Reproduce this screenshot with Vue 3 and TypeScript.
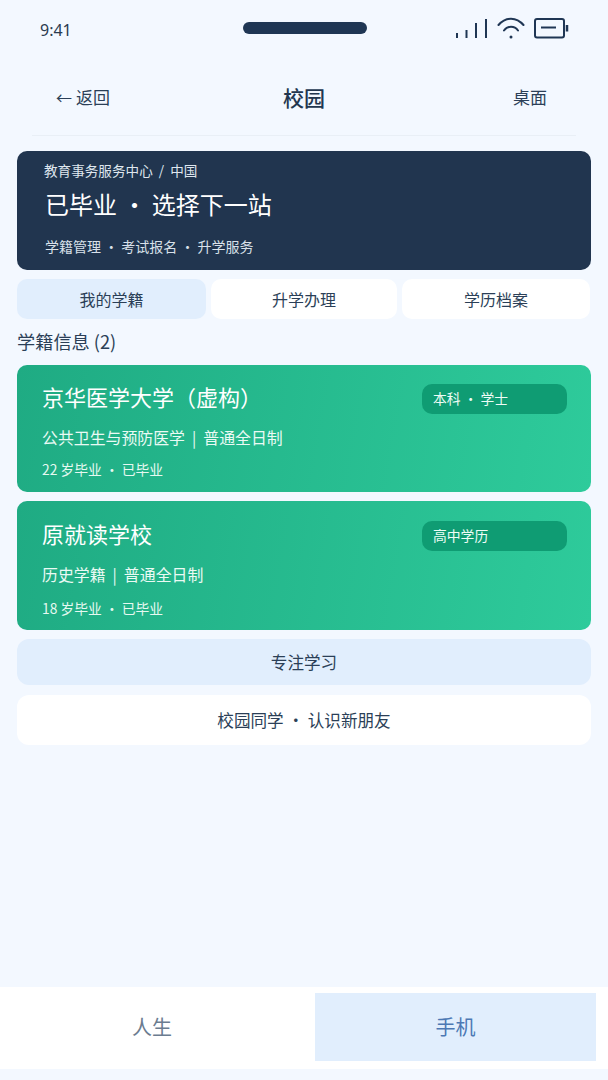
<template>
  <div class="phone">
    <div class="status-bar">
      <span class="time">9:41</span>
      <div class="notch"></div>
      <div class="status-icons">
        <svg width="33" height="22" viewBox="0 0 33 22" fill="none" stroke="#1f3654" stroke-width="2">
          <path d="M2 17v5M11.500 14v8M21 7v15M31 3v19" />
        </svg>
        <svg width="28" height="26" viewBox="0 0 28 26" fill="none" stroke="#1f3654" stroke-width="2" stroke-linecap="round">
          <path d="M1.500 9C8.500 0.500 19.500 0.500 26.500 9" />
          <path d="M7 14.500C10.500 9.500 17.500 9.500 21 14.500" />
          <circle cx="14" cy="21" r="1.500" fill="#1f3654" stroke="none" />
        </svg>
        <svg width="35" height="24" viewBox="0 0 35 24" fill="none" stroke="#1f3654" stroke-width="2">
          <rect x="1" y="3" width="29" height="18.500" rx="2" />
          <path d="M7 11.500h15" />
          <path d="M33 9v6.500" stroke-width="2.500" />
        </svg>
      </div>
    </div>

    <header class="nav">
      <span class="nav-link back"><span class="arrow">←</span>返回</span>
      <span class="nav-title">校园</span>
      <span class="nav-link desk">桌面</span>
    </header>

    <main class="content">
      <section class="hero">
        <div class="hero-crumb">教育事务服务中心 / 中国</div>
        <div class="hero-title">已毕业 · 选择下一站</div>
        <div class="hero-sub">学籍管理 · 考试报名 · 升学服务</div>
      </section>

      <div class="tabs">
        <div v-for="(tab, i) in tabs" :key="tab" class="tab" :class="{ active: i === 0 }">{{ tab }}</div>
      </div>

      <h2 class="section-title">学籍信息 (2)</h2>

      <article v-for="school in schools" :key="school.name" class="school-card" :class="school.size">
        <div class="school-head">
          <div class="school-name">{{ school.name }}</div>
          <div class="school-badge">{{ school.badge }}</div>
        </div>
        <div class="school-major">{{ school.major }}<span class="sep">|</span>{{ school.mode }}</div>
        <div class="school-meta">{{ school.meta }}</div>
      </article>

      <div class="wide-btn focus">专注学习</div>
      <div class="wide-btn friends">校园同学 · 认识新朋友</div>
    </main>

    <footer class="bottom-bar">
      <div class="bottom-item">人生</div>
      <div class="bottom-item active">手机</div>
    </footer>
  </div>
</template>

<script setup lang="ts">
interface School {
  name: string
  badge: string
  major: string
  mode: string
  meta: string
  size: string
}

const tabs = ['我的学籍', '升学办理', '学历档案']

const schools: School[] = [
  {
    name: '京华医学大学（虚构）',
    badge: '本科 · 学士',
    major: '公共卫生与预防医学',
    mode: '普通全日制',
    meta: '22 岁毕业 · 已毕业',
    size: 'first'
  },
  {
    name: '原就读学校',
    badge: '高中学历',
    major: '历史学籍',
    mode: '普通全日制',
    meta: '18 岁毕业 · 已毕业',
    size: 'second'
  }
]
</script>

<style>
html,
body {
  margin: 0;
  background: #f3f8ff;
}
</style>

<style scoped>
.phone {
  width: 608px;
  height: 1080px;
  display: flex;
  flex-direction: column;
  overflow: hidden;
  background: #f3f8ff;
  color: #1f3654;
  font-family: "Noto Sans CJK SC", "Noto Sans", sans-serif;
}

.status-bar {
  height: 58px;
  flex: none;
  display: grid;
  grid-template-columns: 1fr auto 1fr;
  align-items: start;
  padding: 0 39px 0 40px;
}

.time {
  margin-top: 18px;
  font-family: "Noto Sans", sans-serif;
  font-size: 16px;
  line-height: 24px;
  color: #2b3b50;
}

.notch {
  width: 124px;
  height: 12px;
  margin-top: 22px;
  border-radius: 6px;
  background: #1f3654;
}

.status-icons {
  display: flex;
  gap: 9px;
  align-items: flex-start;
  justify-self: end;
  margin-top: 16px;
}

.nav {
  flex: none;
  height: 78px;
  margin: 0 32px;
  padding: 0 24px;
  display: grid;
  grid-template-columns: 1fr auto 1fr;
  align-items: center;
  border-bottom: 1px solid #e9eff6;
  box-sizing: border-box;
}

.nav-link {
  font-size: 17px;
  line-height: 24px;
  color: #2b3f57;
}

.arrow {
  margin-right: 4px;
  font-size: 16px;
}

.desk {
  justify-self: end;
  margin-right: 5px;
}

.nav-title {
  font-size: 21px;
  font-weight: 500;
  color: #22364f;
}

.content {
  flex: 1;
  padding: 15px 17px 0;
  display: flex;
  flex-direction: column;
}

.hero {
  height: 119px;
  box-sizing: border-box;
  padding: 10px 27px 0;
  border-radius: 10px;
  background: #21354f;
  color: #fff;
}

.hero-crumb {
  font-size: 13.6px;
  line-height: 18px;
  word-spacing: 3px;
  color: #dfe6ee;
}

.hero-title {
  margin-top: 8px;
  margin-left: 1px;
  font-size: 24px;
  line-height: 34px;
  color: #fff;
}

.hero-sub {
  margin-top: 15px;
  margin-left: 1px;
  font-size: 14px;
  line-height: 20px;
  color: #d9e1ea;
}

.tabs {
  display: grid;
  grid-template-columns: 189px 186px 188px;
  gap: 5px;
  margin-top: 9px;
}

.tab {
  height: 40px;
  border-radius: 10px;
  background: #fff;
  text-align: center;
  font-size: 16px;
  line-height: 40px;
  color: #2b3f57;
}

.tab.active {
  background: #e1eefd;
}

.section-title {
  margin: 9px 0 0;
  font-size: 18.2px;
  font-weight: 400;
  line-height: 26px;
  color: #2b3f57;
}

.school-card {
  box-sizing: border-box;
  border-radius: 10px;
  padding: 0 24px 0 25px;
  background: linear-gradient(100deg, #1fab83 0%, #2ecb9b 100%);
  color: #fff;
}

.school-card.first {
  height: 127px;
  margin-top: 11px;
  padding-top: 16px;
}

.school-card.second {
  height: 129px;
  margin-top: 9px;
  padding-top: 17px;
}

.school-head {
  display: flex;
  justify-content: space-between;
  align-items: flex-start;
}

.school-name {
  font-size: 22px;
  line-height: 30px;
}

.school-badge {
  width: 145px;
  height: 30px;
  margin-top: 3px;
  box-sizing: border-box;
  padding-left: 11px;
  border-radius: 10px;
  background: #0f9c73;
  font-size: 13.8px;
  line-height: 28px;
  color: #eefcf6;
}

.school-major {
  margin-top: 13px;
  font-size: 15.9px;
  line-height: 22px;
  color: #eafaf4;
}

.sep {
  margin: 0 7px;
}

.school-meta {
  margin-top: 11px;
  font-size: 13.8px;
  line-height: 18px;
  color: #e6f9f1;
}

.second .school-meta {
  margin-top: 13px;
}

.wide-btn {
  text-align: center;
  font-size: 16.6px;
  color: #2b3f57;
  border-radius: 12px;
}

.focus {
  height: 46px;
  line-height: 46px;
  margin-top: 9px;
  background: #e1eefd;
}

.friends {
  height: 50px;
  line-height: 50px;
  margin-top: 10px;
  background: #fff;
}

.bottom-bar {
  flex: none;
  height: 82px;
  margin-bottom: 11px;
  box-sizing: border-box;
  padding: 6px 12px 8px 0;
  display: grid;
  grid-template-columns: 304px 281px;
  column-gap: 11px;
  background: #fff;
}

.bottom-item {
  text-align: center;
  font-size: 20px;
  line-height: 68px;
  color: #6b7c90;
}

.bottom-item.active {
  background: #e1eefd;
  color: #4c78b4;
}
</style>
